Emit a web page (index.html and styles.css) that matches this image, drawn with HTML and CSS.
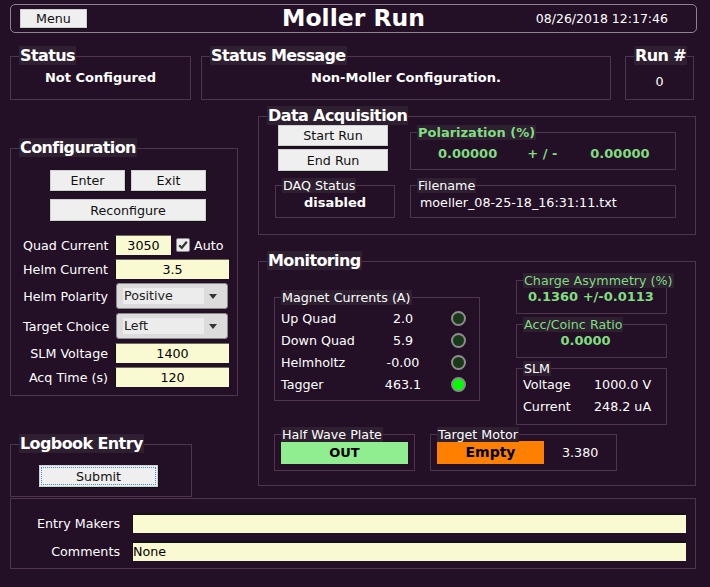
FILE: index.html
```html
<!DOCTYPE html>
<html lang="en">
<head>
    <meta charset="UTF-8">
    <title>Moller Run</title>
    <link rel="stylesheet" href="styles.css">
</head>
<body>
<div class="app">
    <header class="topbar">
        <div><button class="btn menu-btn">Menu</button></div>
        <h1>Moller Run</h1>
        <div class="clock">08/26/2018 12:17:46</div>
    </header>

    <div class="status-row">
        <section class="group status-box">
            <h2 class="group-title">Status</h2>
            <div class="status-value">Not Configured</div>
        </section>
        <section class="group message-box">
            <h2 class="group-title">Status Message</h2>
            <div class="status-value">Non-Moller Configuration.</div>
        </section>
        <section class="group run-box">
            <h2 class="group-title">Run #</h2>
            <div class="run-value">0</div>
        </section>
    </div>

    <div class="main">
        <div class="left-col">
            <section class="group config">
                <h2 class="group-title">Configuration</h2>
                <div class="config-buttons">
                    <button class="btn">Enter</button>
                    <button class="btn">Exit</button>
                    <button class="btn wide">Reconfigure</button>
                </div>
                <div class="config-form">
                    <label>Quad Current</label>
                    <div class="quad-cell">
                        <div class="field quad-field">3050</div>
                        <span class="checkbox">
                            <svg width="12" height="12" viewBox="0 0 12 12"><path d="M2.2 6.2 L4.8 8.8 L9.8 2.8" fill="none" stroke="#333" stroke-width="2.2"/></svg>
                        </span>
                        <span>Auto</span>
                    </div>
                    <label>Helm Current</label>
                    <div class="field">3.5</div>
                    <label>Helm Polarity</label>
                    <div class="combo"><span class="combo-text">Positive</span><span class="combo-arrow"></span></div>
                    <label>Target Choice</label>
                    <div class="combo"><span class="combo-text">Left</span><span class="combo-arrow"></span></div>
                    <label>SLM Voltage</label>
                    <div class="field">1400</div>
                    <label>Acq Time (s)</label>
                    <div class="field">120</div>
                </div>
            </section>

            <section class="group logbook">
                <h2 class="group-title">Logbook Entry</h2>
                <button class="btn submit-btn">Submit</button>
            </section>
        </div>

        <div class="right-col">
            <section class="group daq">
                <h2 class="group-title">Data Acquisition</h2>
                <div class="daq-body">
                    <div class="run-buttons">
                        <button class="btn">Start Run</button>
                        <button class="btn end">End Run</button>
                    </div>
                    <div class="sub polarization">
                        <span class="sub-title green bold">Polarization (%)</span>
                        <span>0.00000</span>
                        <span>+ / -</span>
                        <span class="pol-error">0.00000</span>
                    </div>
                    <div class="sub daq-status">
                        <span class="sub-title">DAQ Status</span>
                        <b>disabled</b>
                    </div>
                    <div class="sub filename">
                        <span class="sub-title">Filename</span>
                        moeller_08-25-18_16:31:11.txt
                    </div>
                </div>
            </section>

            <section class="group monitoring">
                <h2 class="group-title">Monitoring</h2>
                <div class="monitor-top">
                    <div class="sub magnets">
                        <span class="sub-title">Magnet Currents (A)</span>
                        <div class="magnet-grid">
                            <span>Up Quad</span><span class="num">2.0</span><span class="led"></span>
                            <span>Down Quad</span><span class="num">5.9</span><span class="led"></span>
                            <span>Helmholtz</span><span class="num">-0.00</span><span class="led"></span>
                            <span>Tagger</span><span class="num">463.1</span><span class="led on"></span>
                        </div>
                    </div>
                    <div class="monitor-side">
                        <div class="sub charge">
                            <span class="sub-title green">Charge Asymmetry (%)</span>
                            <b class="green">0.1360 +/-0.0113</b>
                        </div>
                        <div class="sub ratio">
                            <span class="sub-title green">Acc/Coinc Ratio</span>
                            <b class="green">0.0000</b>
                        </div>
                        <div class="sub slm">
                            <span class="sub-title">SLM</span>
                            <span>Voltage</span><span>1000.0 V</span>
                            <span>Current</span><span>248.2 uA</span>
                        </div>
                    </div>
                </div>
                <div class="monitor-bottom">
                    <div class="sub hwp">
                        <span class="sub-title">Half Wave Plate</span>
                        <div class="state-bar out">OUT</div>
                    </div>
                    <div class="sub motor">
                        <span class="sub-title">Target Motor</span>
                        <div class="state-bar empty">Empty</div>
                        <span class="motor-pos">3.380</span>
                    </div>
                </div>
            </section>
        </div>
    </div>

    <section class="group entry">
        <div class="entry-form">
            <label>Entry Makers</label>
            <div class="entry-field"></div>
            <label>Comments</label>
            <div class="entry-field">None</div>
        </div>
    </section>
</div>
</body>
</html>
```

FILE: styles.css
```css
* {
    box-sizing: border-box;
}
body {
    margin: 0;
    background: #231026;
    color: #fff;
    font-family: "DejaVu Sans", sans-serif;
    font-size: 12.7px;
}
.app {
    width: 710px;
    height: 587px;
    padding: 4px 0 0 10px;
}
b, .bold {
    font-weight: bold;
    font-size: 13px;
}
.green {
    color: #80de80;
}

/* buttons */
.btn {
    background: #efefef;
    border: 1px solid #d0d0d0;
    box-shadow: 1px 1px 0 #111;
    color: #111;
    font-family: inherit;
    font-size: 12.7px;
    padding: 0;
}

/* header */
.topbar {
    width: 687px;
    height: 29px;
    border: 1px solid #8d8290;
    border-radius: 5px;
    display: grid;
    grid-template-columns: 1fr auto 1fr;
    align-items: center;
}
.menu-btn {
    margin-left: 9px;
    width: 67px;
    height: 19px;
    display: block;
}
.topbar h1 {
    margin: 0;
    font-size: 23.5px;
    line-height: 27px;
}
.clock {
    justify-self: end;
    margin-right: 28px;
    font-size: 12.5px;
}

/* group boxes */
.group {
    position: relative;
    border: 1px solid #4f3450;
}
.group-title {
    position: absolute;
    left: 8px;
    top: -11px;
    margin: 0;
    padding: 0 1px;
    background: #2e1f31;
    font-size: 16px;
    letter-spacing: -0.6px;
    line-height: 19px;
    white-space: nowrap;
}
.sub {
    position: relative;
    border: 1px solid #4f3450;
}
.sub-title {
    position: absolute;
    left: 6px;
    top: -8px;
    padding: 0 1px;
    background: #2e1f31;
    line-height: 15px;
    white-space: nowrap;
}

/* status row */
.status-row {
    display: flex;
    margin-top: 23px;
    height: 44px;
}
.status-box {
    width: 181px;
}
.message-box {
    width: 410px;
    margin-left: 10px;
}
.run-box {
    width: 69px;
    margin-left: 14px;
}
.status-value {
    padding-top: 13px;
    text-align: center;
    font-weight: bold;
    font-size: 13px;
    line-height: 16px;
}
.run-value {
    padding-top: 17px;
    text-align: center;
    line-height: 16px;
}

.main {
    display: flex;
    margin-top: 16px;
    height: 381px;
}
.left-col {
    width: 228px;
}
.right-col {
    width: 438px;
    margin-left: 20px;
}

/* configuration */
.config {
    margin-top: 32px;
    height: 248px;
    padding-top: 21px;
}
.config-buttons {
    display: grid;
    grid-template-columns: 75px 75px;
    grid-template-rows: 21px 22px;
    gap: 8px 6px;
    margin-left: 39px;
}
.config-buttons .wide {
    grid-column: span 2;
}
.config-form {
    display: grid;
    grid-template-columns: 85px 114px;
    grid-template-rows: 20px 20px 26px 26px 20px 20px;
    column-gap: 7px;
    row-gap: 4px;
    margin-top: 14px;
    padding-left: 12px;
}
.config-form label {
    text-align: right;
    align-self: center;
    white-space: nowrap;
}
.field {
    background: #fafad2;
    color: #000;
    border-left: 1px solid #111;
    border-top: 1px solid #6b6b60;
    text-align: center;
    line-height: 19px;
}
.quad-cell {
    display: flex;
    align-items: center;
}
.quad-field {
    width: 56px;
    height: 20px;
    flex: none;
}
.checkbox {
    width: 14px;
    height: 14px;
    margin: 0 4px 0 5px;
    background: #ededed;
    border: 1px solid #8a8a8a;
    border-radius: 2px;
    display: flex;
    align-items: center;
    justify-content: center;
}
.combo {
    margin: 0 1px;
    border: 1px solid #8a8a8a;
    border-radius: 3px;
    background: #dcdcdc;
    display: flex;
    align-items: center;
    padding: 0 10px 0 6px;
}
.combo-text {
    width: 82px;
    height: 16px;
    line-height: 16px;
    padding-left: 1px;
    background: #ececec;
    color: #222;
}
.combo-arrow {
    margin-left: 5px;
    border-left: 4px solid transparent;
    border-right: 4px solid transparent;
    border-top: 5px solid #333;
}

/* logbook */
.logbook {
    margin-top: 48px;
    width: 182px;
    height: 53px;
}
.submit-btn {
    display: block;
    margin: 20px 0 0 28px;
    width: 119px;
    height: 22px;
    outline: 1px dotted #3a8ee6;
    outline-offset: -3px;
}

/* data acquisition */
.daq {
    height: 119px;
}
.daq-body {
    display: grid;
    grid-template-columns: 120px 266px;
    grid-template-rows: 46px 33px;
    column-gap: 15px;
    row-gap: 14px;
    padding: 8px 0 0 16px;
}
.run-buttons {
    display: flex;
    flex-direction: column;
    gap: 3px;
    margin-left: 3px;
}
.run-buttons .btn {
    width: 110px;
    height: 21px;
}
.run-buttons .end {
    height: 22px;
}
.polarization {
    margin-top: 7px;
    height: 38px;
    display: flex;
    align-items: center;
    gap: 30px;
    padding: 4px 0 0 27px;
    color: #80de80;
    font-weight: bold;
    font-size: 13px;
}
.pol-error {
    margin-left: 3px;
}
.daq-status {
    display: flex;
    align-items: center;
    justify-content: center;
    padding-top: 2px;
}
.filename {
    display: flex;
    align-items: center;
    padding: 2px 0 0 9px;
}

/* monitoring */
.monitoring {
    margin-top: 26px;
    height: 225px;
    padding-left: 15px;
}
.monitor-top {
    display: flex;
    align-items: flex-start;
}
.magnets {
    margin-top: 35px;
    width: 206px;
    height: 104px;
    padding: 9px 0 0 6px;
}
.magnet-grid {
    display: grid;
    grid-template-columns: 92px 60px 33px;
    grid-auto-rows: 22px;
    align-items: center;
}
.num {
    text-align: center;
}
.led {
    justify-self: end;
    width: 15px;
    height: 15px;
    border-radius: 50%;
    border: 2px solid #8c8c8c;
    background: #193a19;
}
.led.on {
    background: #00ff00;
}
.monitor-side {
    margin: 18px 0 0 36px;
    width: 151px;
    display: flex;
    flex-direction: column;
    gap: 10px;
}
.charge {
    height: 34px;
    padding: 8px 0 0 11px;
}
.ratio {
    height: 34px;
    padding: 8px 12px 0 0;
    text-align: center;
}
.slm {
    height: 57px;
    display: grid;
    grid-template-columns: 71px auto;
    grid-auto-rows: 22px;
    align-items: center;
    padding: 4px 0 0 6px;
}
.monitor-bottom {
    display: flex;
    margin-top: 9px;
}
.hwp {
    width: 141px;
    height: 37px;
    padding: 7px 0 0 6px;
}
.motor {
    width: 187px;
    height: 37px;
    margin-left: 15px;
    padding: 6px 0 0 6px;
    display: flex;
    align-items: flex-start;
}
.state-bar {
    color: #000;
    font-weight: bold;
    font-size: 13px;
    text-align: center;
}
.state-bar.out {
    width: 127px;
    height: 22px;
    line-height: 22px;
    background: #90ee90;
}
.state-bar.empty {
    width: 107px;
    height: 23px;
    line-height: 23px;
    background: #ff8000;
    font-size: 14px;
}
.motor-pos {
    margin-left: 18px;
    line-height: 23px;
}

/* entry */
.entry {
    margin-top: 1px;
    width: 686px;
    height: 71px;
}
.entry-form {
    display: grid;
    grid-template-columns: 109px 554px;
    grid-template-rows: 20px 20px;
    column-gap: 12px;
    row-gap: 8px;
    padding-top: 14px;
}
.entry-form label {
    text-align: right;
    align-self: center;
}
.entry-field {
    background: #fafad2;
    color: #000;
    border-top: 2px solid #111;
    border-left: 1px solid #111;
    line-height: 18px;
}
```
